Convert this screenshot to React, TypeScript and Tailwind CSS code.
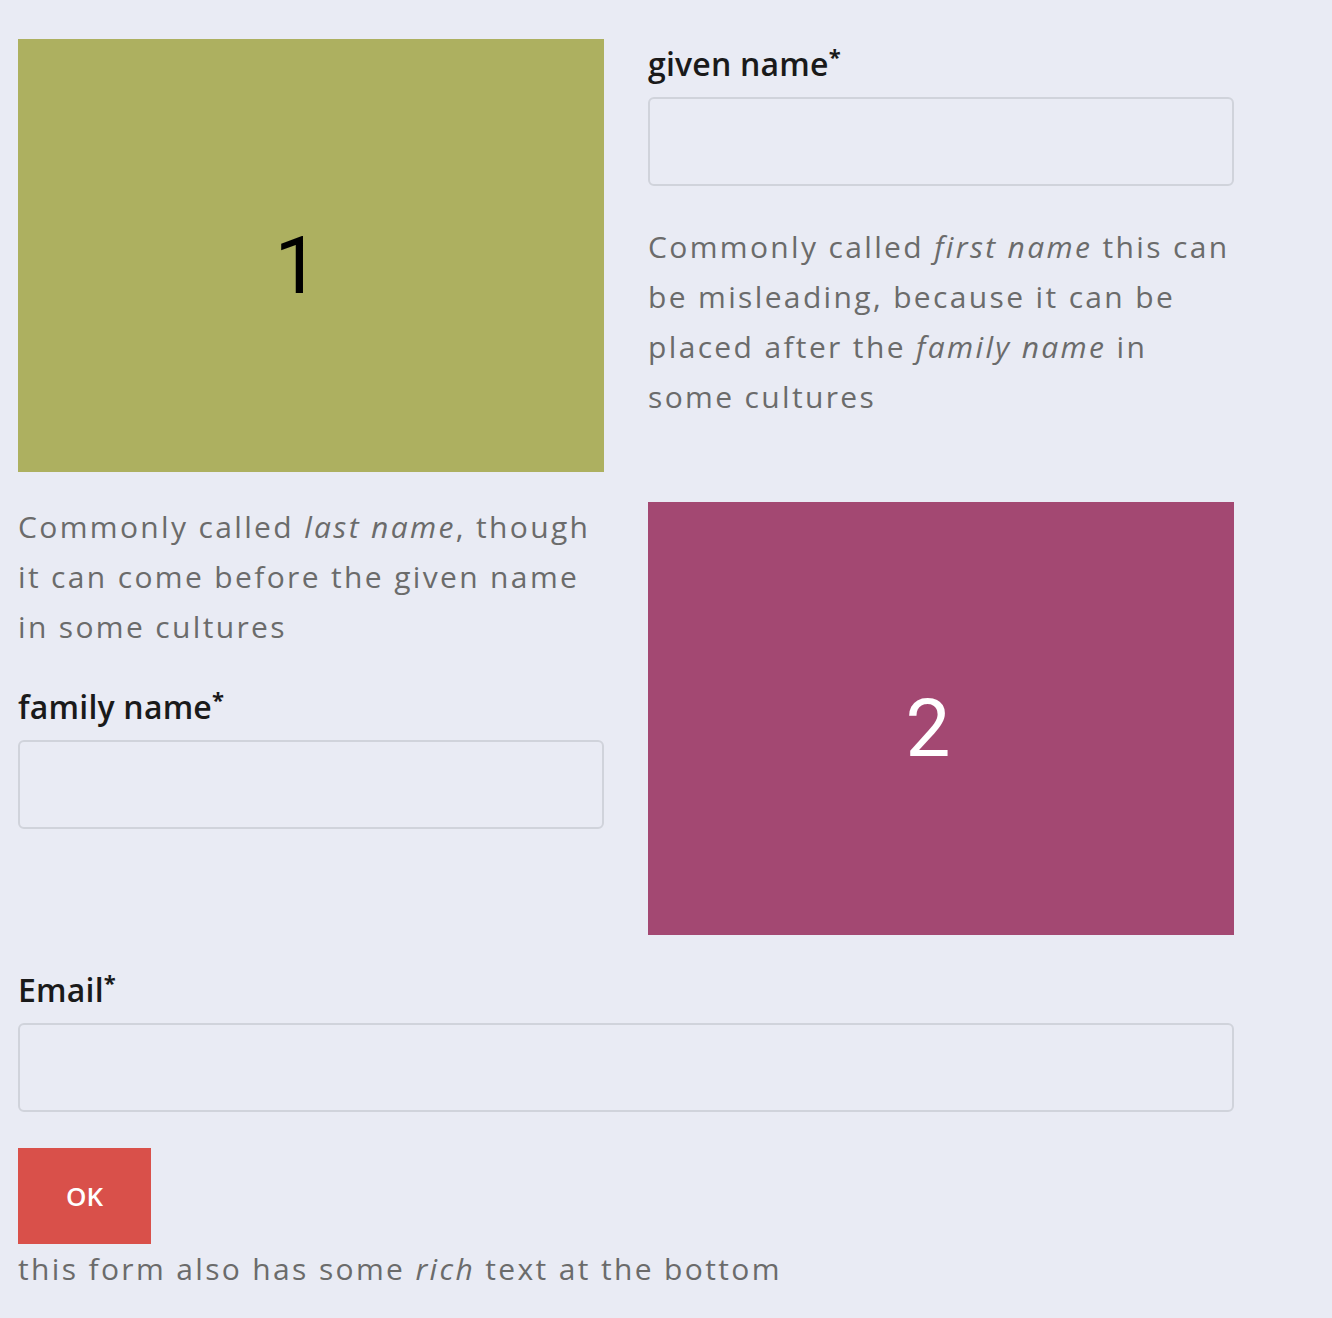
export default function App() {
  const help = "text-[30px] leading-[50px] text-[#6b6b6b] tracking-[2.35px]";
  const label = "text-[32px] leading-[50px] font-semibold text-[#1a1a1a] tracking-[0.2px]";
  const star = "text-[22px] font-bold";
  const input =
    "mt-[8px] h-[89px] w-full rounded-[6px] border-2 border-[#d0d3db] bg-transparent outline-none";
  const digit = { fontFamily: 'Roboto, "Liberation Sans", sans-serif' };

  return (
    <div
      className="min-h-screen bg-[#e9ebf4] px-[18px] pt-[39px]"
      style={{ fontFamily: '"Open Sans", "Noto Sans", sans-serif' }}
    >
      <form className="w-[1216px]">
        <div className="grid grid-cols-[586px_586px] gap-x-[44px] gap-y-[30px]">
          {/* row 1 */}
          <div className="flex h-[433px] items-center justify-center bg-[#adb060] pr-[28px] pt-[20px]">
            <span className="text-[80px] text-black" style={digit}>
              1
            </span>
          </div>
          <div>
            <label className={label}>
              given name<sup className={star}>*</sup>
            </label>
            <input className={input} />
            <p className={`${help} mt-[36px]`}>
              Commonly called <em>first name</em> this can be misleading, because it can be
              placed after the <em>family name</em> in some cultures
            </p>
          </div>

          {/* row 2 */}
          <div>
            <p className={help}>
              Commonly called <em>last name</em>, though it can come before the given name in
              some cultures
            </p>
            <label className={`${label} mt-[30px] block`}>
              family name<sup className={star}>*</sup>
            </label>
            <input className={input} />
          </div>
          <div className="flex h-[433px] items-center justify-center bg-[#a34872] pr-[26px] pt-[20px]">
            <span className="text-[80px] text-white" style={digit}>
              2
            </span>
          </div>
        </div>

        {/* email */}
        <div className="mt-[30px]">
          <label className={`${label} block`}>
            Email<sup className={star}>*</sup>
          </label>
          <input className={input} />
        </div>

        <button
          type="button"
          className="mt-[36px] h-[96px] w-[133px] bg-[#d9504a] text-[26px] font-semibold text-white"
        >
          OK
        </button>
        <p className={help}>
          this form also has some <em>rich</em> text at the bottom
        </p>
      </form>
    </div>
  );
}
